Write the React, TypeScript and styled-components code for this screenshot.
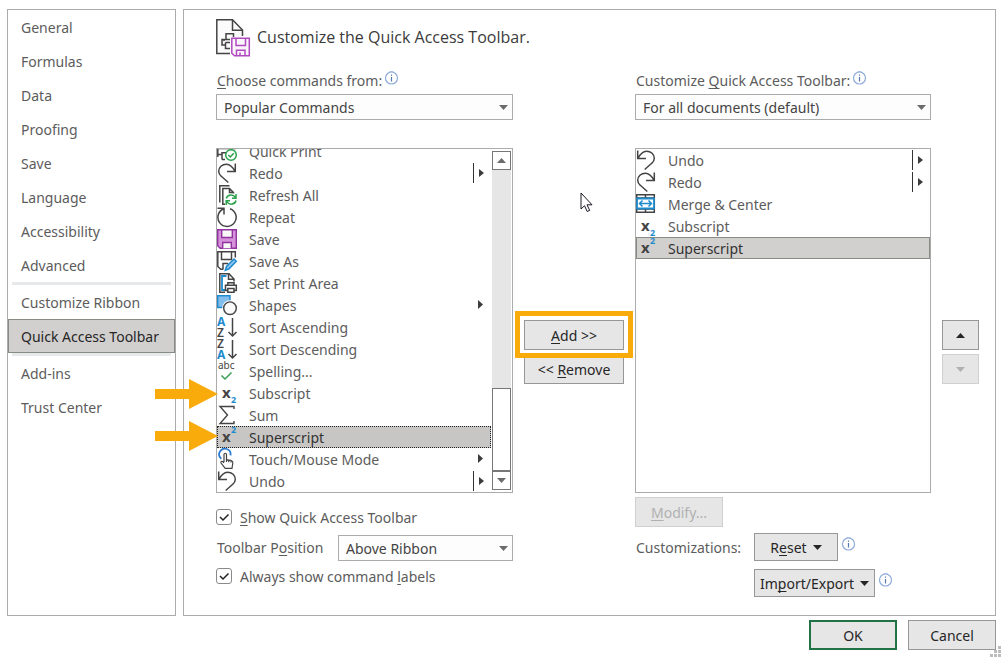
import React from "react";
import styled, { createGlobalStyle, css } from "styled-components";

const ink = "#444444";
const blue = "#1e8bcd";

const GlobalStyle = createGlobalStyle`
  *, *::before, *::after { box-sizing: border-box; }
  body {
    margin: 0;
    background: #ffffff;
    color: #5c5c5c;
    font: 14px/20px "Noto Sans", "Open Sans", sans-serif;
  }
  button, select, input { font: inherit; margin: 0; }
`;

const Dialog = styled.div`
  position: relative;
  display: flex;
  flex-direction: column;
  gap: 4px;
  min-height: 100vh;
  padding: 9px 7px;
`;

const Body = styled.div`
  display: flex;
  flex: 1;
  gap: 7px;
`;

const Nav = styled.nav`
  flex: 0 0 169px;
  border: 1px solid #ababab;
`;

const NavItem = styled.button<{ $selected?: boolean }>`
  display: block;
  width: 100%;
  height: 34px;
  padding: 2px 12px 0;
  border: 1px solid transparent;
  background: none;
  color: inherit;
  text-align: left;
  white-space: nowrap;
  ${(p) =>
    p.$selected &&
    css`
      border-color: #868b84;
      background: #d2d0ce;
      color: #262626;
    `}
`;

const NavDivider = styled.hr`
  height: 3px;
  margin: 0 4px;
  border: 0;
  background: #e6e8e9;
`;

const Panel = styled.main`
  flex: 1;
  min-width: 0;
  padding: 9px 16px 16px 32px;
  border: 1px solid #ababab;
`;

const Header = styled.header`
  display: flex;
  align-items: center;
  gap: 6px;
  margin-bottom: 13px;
`;

const Title = styled.h1`
  margin: 0;
  padding-bottom: 2px;
  color: #3b3b3b;
  font-family: "Open Sans", "Noto Sans", sans-serif;
  font-size: 16px;
  font-weight: 400;
  line-height: 22px;
`;

const Columns = styled.div`
  display: grid;
  grid-template-columns: minmax(0, 297fr) 100px minmax(0, 296fr) 37px;
  column-gap: 11px;
`;

const Field = styled.div<{ $column: number }>`
  grid-column: ${(p) => p.$column};
  display: flex;
  flex-direction: column;
  gap: 4px;
  margin-bottom: 28px;
`;

const FieldLabel = styled.div`
  display: flex;
  gap: 2px;
  height: 20px;
  padding-left: 1px;
  white-space: nowrap;
  line-height: 22px;
`;

const Key = styled.span`
  text-decoration: underline;
  text-underline-offset: 2px;
  text-decoration-skip-ink: none;
`;

const SelectBox = styled.div`
  position: relative;
  flex: 1;
`;

const Select = styled.select`
  display: block;
  width: 100%;
  height: 26px;
  padding: 2px 24px 0 7px;
  border: 1px solid #ababab;
  border-radius: 0;
  background: #fdfdfd;
  color: ${ink};
  appearance: none;
`;

const SelectArrow = styled.svg`
  position: absolute;
  top: 11px;
  right: 5px;
  pointer-events: none;
`;

const ListArea = styled.div`
  position: relative;
  min-width: 0;
`;

const ListFrame = styled.div`
  display: flex;
  height: 345px;
  overflow: hidden;
  border: 1px solid #ababab;
`;

const List = styled.ul<{ $scrolled?: boolean }>`
  display: flex;
  flex: 1;
  flex-direction: column;
  justify-content: ${(p) => (p.$scrolled ? "flex-end" : "flex-start")};
  min-width: 0;
  margin: 0;
  padding: 0;
  list-style: none;
`;

const Row = styled.li<{ $selected?: "dotted" | "solid" }>`
  display: flex;
  flex: 0 0 22px;
  align-items: center;
  position: relative;
  padding-right: 6px;
  ${(p) =>
    p.$selected &&
    css`
      background: ${p.$selected === "dotted" ? "#c8c6c4" : "#d2d0ce"};
      color: #333333;
      outline: 1px ${p.$selected} ${p.$selected === "dotted" ? "#222222" : "#868b84"};
      outline-offset: -1px;
    `}
`;

const RowIcon = styled.svg`
  overflow: visible;
`;

const RowText = styled.span`
  flex: 1;
  padding: 2px 0 0 12px;
`;

const ScrollBar = styled.div`
  display: flex;
  flex-direction: column;
  width: 19px;
  margin: 2px 1px 2px 1px;
  background: #e6e6e6;
`;

const ScrollPart = styled.button<{ $size: number; $push?: boolean }>`
  display: flex;
  align-items: center;
  justify-content: center;
  height: ${(p) => p.$size}px;
  margin-top: ${(p) => (p.$push ? "auto" : "0")};
  padding: 0;
  border: 1px solid #777777;
  background: #ffffff;
`;

const Stack = styled.div`
  display: flex;
  flex-direction: column;
  gap: 4px;
  padding-top: 172px;
`;

const Button = styled.button<{ $width?: number; $height?: number; $primary?: boolean }>`
  display: flex;
  align-items: center;
  justify-content: center;
  gap: 6px;
  width: ${(p) => (p.$width ? `${p.$width}px` : "100%")};
  height: ${(p) => p.$height ?? 30}px;
  padding: 0;
  border: ${(p) => (p.$primary ? "2px solid #217346" : "1px solid #979797")};
  background: #e6e6e6;
  color: #262626;
  white-space: pre;
  span { padding-top: 2px; }
  span span { padding-top: 0; }
  &:disabled {
    border-color: #d0d0d0;
    color: #b1b1b1;
  }
`;

const Highlighted = styled.div`
  position: relative;
  &::after {
    content: "";
    position: absolute;
    inset: -9px -9px -8px;
    border: 5px solid #f9ab0c;
    pointer-events: none;
  }
`;

const Options = styled.div`
  grid-column: 1;
  padding-top: 16px;
`;

const OptionRow = styled.div`
  display: flex;
  align-items: center;
  margin: 10px 0 7px;
`;

const OptionLabel = styled.label`
  flex: 0 0 122px;
  padding: 0 0 0 1px;
`;

const CheckLabel = styled.label`
  display: flex;
  align-items: center;
  gap: 8px;
  height: 16px;
`;

const CheckText = styled.span`
  padding-top: 2px;
`;

const CheckSlot = styled.span`
  position: relative;
  display: flex;
  svg {
    position: absolute;
    inset: 0;
    pointer-events: none;
  }
`;

const CheckInput = styled.input`
  width: 16px;
  height: 16px;
  border: 1px solid #8a8a8a;
  border-radius: 3px;
  background: #ffffff;
  appearance: none;
  &:not(:checked) + svg { display: none; }
`;

const Custom = styled.div`
  grid-column: 3;
  padding-top: 4px;
`;

const CustomRow = styled.div<{ $gap: number; $indent?: boolean }>`
  display: flex;
  gap: 3px;
  margin-top: ${(p) => p.$gap}px;
  padding-left: ${(p) => (p.$indent ? 119 : 0)}px;
  > svg { margin-top: 3px; }
`;

const CustomLabel = styled.span`
  flex: 0 0 116px;
  align-self: center;
  padding: 2px 0 0 1px;
`;

const Footer = styled.footer`
  display: flex;
  justify-content: flex-end;
  gap: 11px;
`;

const Grip = styled.svg`
  position: absolute;
  right: 2px;
  bottom: 2px;
`;

const Pointer = styled.svg`
  position: absolute;
  top: 44px;
  left: 56px;
`;

const MiddleArea = styled.div`
  position: relative;
`;

const Callout = styled.svg<{ $top: number }>`
  position: absolute;
  top: ${(p) => p.$top}px;
  left: -61px;
`;

const Down = ({ color = "#262626" }: { color?: string }) => (
  <svg width="9" height="5" viewBox="0 0 9 5" aria-hidden="true">
    <path d="M0 0H9L4.500 5Z" fill={color} />
  </svg>
);

const Up = ({ color = "#262626" }: { color?: string }) => (
  <svg width="9" height="5" viewBox="0 0 9 5" aria-hidden="true">
    <path d="M0 5H9L4.500 0Z" fill={color} />
  </svg>
);

const Info = () => (
  <svg width="15" height="15" viewBox="0 0 15 15" aria-label="Information" role="img">
    <circle cx="7.5" cy="8" r="6" fill="#fff" stroke="#8eabdb" strokeWidth="1.2" />
    <path d="M5.5 1.5h4" stroke="#a9c0e6" />
    <path d="M7.5 7v4.5M7.5 4.5v1.3" stroke="#5579ae" strokeWidth="1.2" />
  </svg>
);

const letter = { fontFamily: '"Noto Sans", sans-serif' };

const icons: Record<string, React.ReactNode> = {
  quickPrint: (
    <g fill="none" stroke={ink} strokeWidth="1.5">
      <path d="M4.5 7V1.5h9V7M.8 16V7.5h18M.8 13.5h4M5 18.5v-6.700h7M5 18.500h3" />
      <circle cx="14" cy="14" r="5.300" fill="#fff" stroke="#2ba24c" />
      <path d="M11.300 14l2 2 3.500-3.800" stroke="#2ba24c" />
    </g>
  ),
  redo: (
    <path
      d="M18.300.500V8.500H10M18 8.300C15.500 3.500 13.500 1.200 9.500 1.200C5 1.200 1.700 4.500 1.700 8.300C1.700 10.500 2.500 11.800 4.300 13.300L11.300 19.500"
      fill="none"
      stroke={ink}
      strokeWidth="1.500"
    />
  ),
  undo: (
    <path
      d="M1.700.500V8.500H10M2 8.300C4.500 3.500 6.500 1.200 10.500 1.200C15 1.200 18.300 4.500 18.300 8.300C18.300 10.500 17.500 11.800 15.700 13.300L8.700 19.500"
      fill="none"
      stroke={ink}
      strokeWidth="1.500"
    />
  ),
  refresh: (
    <g fill="none" strokeWidth="1.500">
      <path d="M2.800 17.500V.800H12.500M8 19.200H5.800V3.500H12.500L16.500 7.500V8.500M12.500 3.500V7.500H16.500" stroke={ink} />
      <path
        d="M9.300 13.500C10.300 9.500 16 8.500 18.500 12.500M19 9V13.200H15M19 15.500C18 19.800 12 20.500 9.800 16.500M9.200 20V15.800H13"
        stroke="#2ba24c"
      />
    </g>
  ),
  repeat: (
    <path
      d="M.500 1.200H7V7.500M6.800 1.800A9.100 9.100 0 1 0 13 1.700"
      fill="none"
      stroke={ink}
      strokeWidth="1.500"
    />
  ),
  save: (
    <g stroke="#92329e" strokeWidth="1.400">
      <path d="M.7.700H19.300V19.300H3.200L.7 16.800Z" fill="#d592da" />
      <path d="M4.700.700H15.300V8.500H4.700ZM5.700 19.300V13.500H14.300V19.300" fill="#f8f8f8" />
    </g>
  ),
  saveAs: (
    <g fill="none" strokeWidth="1.500">
      <path d="M18.300 6.500V.800H.8V15.500L3.800 18.300H6M4.500 1V8.500H14.500V1M6 18.500V12.500H11" stroke={ink} />
      <path d="M8.300 19.300L9.500 15.500L17 8L19.300 10.300L12 17.800Z" fill="#8cc4ee" stroke={blue} />
    </g>
  ),
  printArea: (
    <g fill="none" strokeWidth="1.500">
      <path d="M8 19.200H2.800V.800H12L17 6V8.500M11.500 1V6.200H17" stroke={ink} />
      <path d="M8 17H5V3H9.500" stroke={blue} strokeWidth="1.800" />
      <path d="M10.800 12V9.800H17V12M10.500 17.500H8.500V12.200H19.300V17.500H17.300M10.800 15.500H17V19.300H10.800Z" fill="#fff" stroke={ink} />
    </g>
  ),
  shapes: (
    <g strokeWidth="1.400">
      <path d="M.7.700H13V12.500H.7Z" fill="#83beec" stroke={blue} />
      <circle cx="13" cy="13" r="7.800" fill="#fff" />
      <circle cx="13" cy="13.200" r="6.300" fill="#fafafa" stroke={ink} />
    </g>
  ),
  sortAsc: (
    <g>
      <text x="0" y="9" fontSize="12" fontWeight="700" fill={blue} style={letter}>A</text>
      <text x="0" y="20" fontSize="12" fontWeight="600" fill={ink} style={letter}>Z</text>
      <path d="M15.500 1V19M11.500 15L15.500 19L19.500 15" fill="none" stroke={ink} strokeWidth="1.500" />
    </g>
  ),
  sortDesc: (
    <g>
      <text x="0" y="9" fontSize="12" fontWeight="600" fill={ink} style={letter}>Z</text>
      <text x="0" y="20" fontSize="12" fontWeight="700" fill={blue} style={letter}>A</text>
      <path d="M15.500 1V19M11.500 15L15.500 19L19.500 15" fill="none" stroke={ink} strokeWidth="1.500" />
    </g>
  ),
  spelling: (
    <g>
      <text x="1" y="8" fontSize="10" fill={ink} style={letter}>abc</text>
      <path d="M4.500 14.500L8 18L14.500 11.500" fill="none" stroke="#3a9f57" strokeWidth="1.500" />
    </g>
  ),
  subscript: (
    <g fontWeight="700" style={letter}>
      <text x="5" y="15" fontSize="15" fill={ink}>x</text>
      <text x="14" y="20" fontSize="9" fill={blue}>2</text>
    </g>
  ),
  superscript: (
    <g fontWeight="700" style={letter}>
      <text x="5" y="15" fontSize="15" fill={ink}>x</text>
      <text x="14" y="6" fontSize="9" fill={blue}>2</text>
    </g>
  ),
  sum: <path d="M17 4V1.500H3L10.500 10L3 18.500H17V16" fill="none" stroke={ink} strokeWidth="1.400" />,
  touch: (
    <g fill="none" strokeWidth="1.400">
      <path d="M4.300 9.800A5.700 5.700 0 1 1 13.500 6.300" stroke="#2b7cd0" strokeWidth="1.800" />
      <path
        d="M7 13V5.500C7 3.800 9.500 3.800 9.500 5.500V10.500L14.500 11.700C15.500 12 16 12.700 15.800 14L15 19.300H8.200L4 14C3.300 12.800 4.800 11.700 6 12.800L7 13.800M9.500 10.500V13M11.800 11.200V13.300M14 11.800V13.600"
        fill="#fff"
        stroke={ink}
        strokeWidth="1.200"
      />
    </g>
  ),
  merge: (
    <g fill="none" strokeWidth="1.500">
      <path d="M.7.700H18.300V18.300H.7ZM9.500 1V5M9.500 15V18M1 4H18M1 15H18" stroke={ink} />
      <path d="M1 4.500H18V14.500H1Z" fill="#fff" stroke={blue} strokeWidth="1.800" />
      <path d="M3.500 9.500H15.500M6.500 6.500L3.500 9.500L6.500 12.500M12.500 6.500L15.500 9.500L12.500 12.500" stroke={blue} />
    </g>
  ),
};

const Icon = ({ name }: { name: string }) => (
  <RowIcon width="20" height="20" viewBox="0 0 20 20" aria-hidden="true">
    {icons[name]}
  </RowIcon>
);

const Flyout = ({ split }: { split?: boolean }) => (
  <svg width="12" height="22" viewBox="0 0 12 22" aria-hidden="true">
    {split && <path d="M.500 1V21" stroke="#333333" />}
    <path d={split ? "M6 7V15L11 11Z" : "M5 6V15L10 10.500Z"} fill="#3b3b3b" />
  </svg>
);

type Command = { icon: string; text: string; menu?: "plain" | "split" };

const available: Command[] = [
  { icon: "quickPrint", text: "Quick Print" },
  { icon: "redo", text: "Redo", menu: "split" },
  { icon: "refresh", text: "Refresh All" },
  { icon: "repeat", text: "Repeat" },
  { icon: "save", text: "Save" },
  { icon: "saveAs", text: "Save As" },
  { icon: "printArea", text: "Set Print Area" },
  { icon: "shapes", text: "Shapes", menu: "plain" },
  { icon: "sortAsc", text: "Sort Ascending" },
  { icon: "sortDesc", text: "Sort Descending" },
  { icon: "spelling", text: "Spelling..." },
  { icon: "subscript", text: "Subscript" },
  { icon: "sum", text: "Sum" },
  { icon: "superscript", text: "Superscript" },
  { icon: "touch", text: "Touch/Mouse Mode", menu: "plain" },
  { icon: "undo", text: "Undo", menu: "split" },
];

const current: Command[] = [
  { icon: "undo", text: "Undo", menu: "split" },
  { icon: "redo", text: "Redo", menu: "split" },
  { icon: "merge", text: "Merge & Center" },
  { icon: "subscript", text: "Subscript" },
  { icon: "superscript", text: "Superscript" },
];

const Commands = ({
  items,
  label,
  mark,
  scrolled,
}: {
  items: Command[];
  label: string;
  mark: "dotted" | "solid";
  scrolled?: boolean;
}) => (
  <List role="listbox" aria-label={label} $scrolled={scrolled}>
    {items.map((c) => {
      const selected = c.icon === "superscript";
      return (
        <Row key={c.icon} role="option" aria-selected={selected} $selected={selected ? mark : undefined}>
          <Icon name={c.icon} />
          <RowText>{c.text}</RowText>
          {c.menu && <Flyout split={c.menu === "split"} />}
        </Row>
      );
    })}
  </List>
);

const DropDown = ({ id, value }: { id: string; value: string }) => (
  <SelectBox>
    <Select id={id} defaultValue={value}>
      <option>{value}</option>
    </Select>
    <SelectArrow width="9" height="5" viewBox="0 0 9 5" aria-hidden="true">
      <path d="M0 0H9L4.500 5Z" fill="#6b6b6b" />
    </SelectArrow>
  </SelectBox>
);

const Check = ({ children }: { children: React.ReactNode }) => (
  <CheckLabel>
    <CheckSlot>
      <CheckInput type="checkbox" defaultChecked />
      <svg width="16" height="16" viewBox="0 0 16 16" aria-hidden="true">
        <path d="M4 8L7 11L12.500 5.500" fill="none" stroke="#222222" strokeWidth="1.500" />
      </svg>
    </CheckSlot>
    <CheckText>{children}</CheckText>
  </CheckLabel>
);

const YellowArrow = ({ top }: { top: number }) => (
  <Callout $top={top} width="63" height="30" viewBox="0 0 63 30" aria-hidden="true">
    <path d="M0 10H34V0L63 15L34 30V20H0Z" fill="#f9ab0c" />
  </Callout>
);

const HeaderIcon = () => (
  <svg width="35" height="38" viewBox="0 0 35 38" fill="none" aria-hidden="true">
    <path d="M14 34.500H.8V.800H16.500L26.500 11V17" fill="#fbfbfb" stroke={ink} strokeWidth="1.500" />
    <path d="M16.500 1V11.300H26.500" stroke={ink} strokeWidth="1.500" />
    <path d="M10 20V14.800H17.500V18M14 20.500H6V26H9.500M9.500 23.500H14M9.500 23.500V29.500H14M8 20V22" stroke={ink} strokeWidth="1.500" />
    <path d="M15.800 19.300H33.300V36.800H18.500L15.800 34.200Z" fill="#fbf5fc" stroke="#b04ac0" strokeWidth="1.500" />
    <path d="M20 19.500V26.500H29.500V19.500M20.500 36.500V31.300H29V36.500M24 36V33.500" stroke="#b04ac0" strokeWidth="1.500" />
  </svg>
);

export default function App() {
  return (
    <Dialog>
      <GlobalStyle />
      <Body>
        <Nav>
          {["General", "Formulas", "Data", "Proofing", "Save", "Language", "Accessibility", "Advanced"].map((t) => (
            <NavItem key={t}>{t}</NavItem>
          ))}
          <NavDivider />
          <NavItem>Customize Ribbon</NavItem>
          <NavItem $selected>Quick Access Toolbar</NavItem>
          <NavDivider />
          <NavItem>Add-ins</NavItem>
          <NavItem>Trust Center</NavItem>
        </Nav>
        <Panel>
          <Header>
            <HeaderIcon />
            <Title>Customize the Quick Access Toolbar.</Title>
          </Header>
          <Columns>
            <Field $column={1}>
              <FieldLabel>
                <label htmlFor="source"><Key>C</Key>hoose commands from:</label>
                <Info />
              </FieldLabel>
              <DropDown id="source" value="Popular Commands" />
            </Field>
            <Field $column={3}>
              <FieldLabel>
                <label htmlFor="scope">Customize <Key>Q</Key>uick Access Toolbar:</label>
                <Info />
              </FieldLabel>
              <DropDown id="scope" value="For all documents (default)" />
            </Field>
            <span />
            <ListArea>
              <ListFrame>
                <Commands items={available} label="Available commands" mark="dotted" scrolled />
                <ScrollBar>
                  <ScrollPart $size={19} aria-label="Scroll up"><Up color="#6b6b6b" /></ScrollPart>
                  <ScrollPart $size={83} $push aria-label="Scroll position" />
                  <ScrollPart $size={19} aria-label="Scroll down"><Down color="#6b6b6b" /></ScrollPart>
                </ScrollBar>
              </ListFrame>
              <YellowArrow top={231} />
              <YellowArrow top={273} />
            </ListArea>
            <MiddleArea>
              <Pointer width="14" height="21" viewBox="0 0 14 21" aria-hidden="true">
                <path d="M1 1V17L4.500 13.700L7.200 19.500L9.700 18.400L7 12.800H12Z" fill="#fff" stroke="#1b1524" />
              </Pointer>
              <Stack>
                <Highlighted>
                  <Button><span><Key>A</Key>dd &gt;&gt;</span></Button>
                </Highlighted>
                <Button><span>&lt;&lt; <Key>R</Key>emove</span></Button>
              </Stack>
            </MiddleArea>
            <ListArea>
              <ListFrame>
                <Commands items={current} label="Toolbar commands" mark="solid" />
              </ListFrame>
            </ListArea>
            <Stack>
              <Button aria-label="Move up"><Up /></Button>
              <Button aria-label="Move down" disabled><Down color="#b1b1b1" /></Button>
            </Stack>
            <Options>
              <Check><Key>S</Key>how Quick Access Toolbar</Check>
              <OptionRow>
                <OptionLabel htmlFor="position">Toolbar P<Key>o</Key>sition</OptionLabel>
                <DropDown id="position" value="Above Ribbon" />
              </OptionRow>
              <Check>Always show command <Key>l</Key>abels</Check>
            </Options>
            <Custom>
              <Button $width={88} disabled><span><Key>M</Key>odify...</span></Button>
              <CustomRow $gap={6}>
                <CustomLabel>Customizations:</CustomLabel>
                <Button $width={84} $height={28}><span>R<Key>e</Key>set</span><Down /></Button>
                <Info />
              </CustomRow>
              <CustomRow $gap={8} $indent>
                <Button $width={121} $height={28}><span>Im<Key>p</Key>ort/Export</span><Down /></Button>
                <Info />
              </CustomRow>
            </Custom>
          </Columns>
        </Panel>
      </Body>
      <Footer>
        <Button $width={88} $primary><span>OK</span></Button>
        <Button $width={88}><span>Cancel</span></Button>
      </Footer>
      <Grip width="11" height="11" viewBox="0 0 11 11" aria-hidden="true">
        <path d="M8 0h3v3h-3zM8 4h3v3h-3zM8 8h3v3h-3zM4 4h3v3h-3zM4 8h3v3h-3zM0 8h3v3h-3z" fill="#bdbdbd" />
      </Grip>
    </Dialog>
  );
}
